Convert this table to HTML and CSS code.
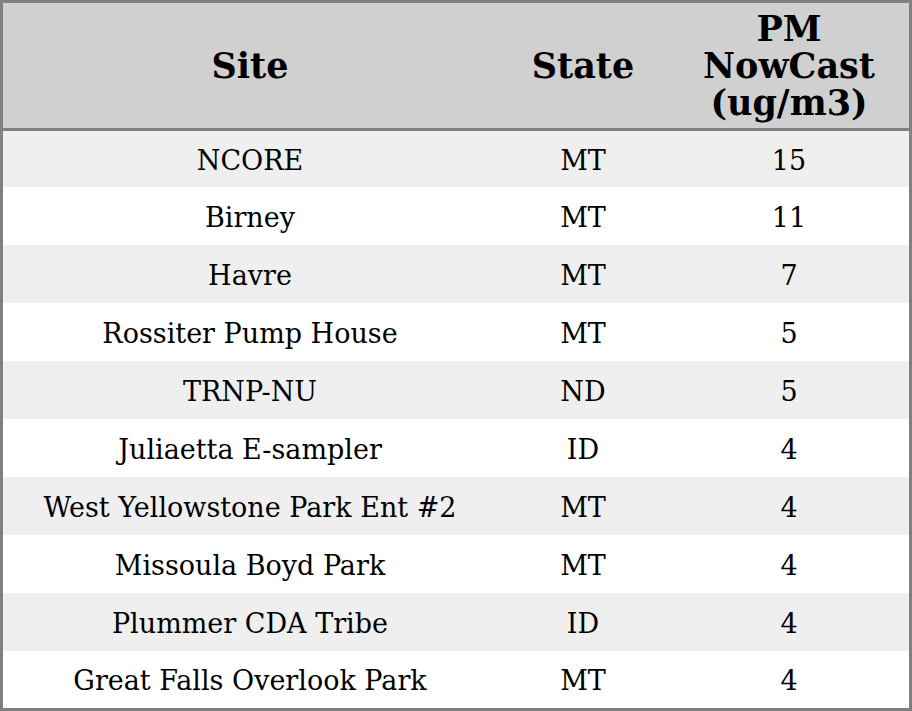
FILE: index.html
```html
<!DOCTYPE html>
<html>
<head>
<meta charset="utf-8">
<link rel="stylesheet" href="styles.css">
</head>
<body>
<table class="tbl">
  <thead>
    <tr class="head-row">
      <th class="c-site">Site</th>
      <th class="c-state">State</th>
      <th class="c-pm">PM<br>NowCast<br>(ug/m3)</th>
    </tr>
  </thead>
  <tbody>
    <tr class="r-first"><td>NCORE</td><td>MT</td><td>15</td></tr>
    <tr><td>Birney</td><td>MT</td><td>11</td></tr>
    <tr><td>Havre</td><td>MT</td><td>7</td></tr>
    <tr><td>Rossiter Pump House</td><td>MT</td><td>5</td></tr>
    <tr><td>TRNP-NU</td><td>ND</td><td>5</td></tr>
    <tr><td>Juliaetta E-sampler</td><td>ID</td><td>4</td></tr>
    <tr><td>West Yellowstone Park Ent #2</td><td>MT</td><td>4</td></tr>
    <tr><td>Missoula Boyd Park</td><td>MT</td><td>4</td></tr>
    <tr><td>Plummer CDA Tribe</td><td>ID</td><td>4</td></tr>
    <tr class="r-last"><td>Great Falls Overlook Park</td><td>MT</td><td>4</td></tr>
  </tbody>
</table>
</body>
</html>
```
FILE: styles.css
```css
html, body {
  margin: 0;
  padding: 0;
  background: #ffffff;
}
.tbl {
  width: 912px;
  border-collapse: separate;
  border-spacing: 0;
  border: 3px solid #808080;
  font-family: "DejaVu Serif", serif;
  color: #000;
  table-layout: fixed;
}
.tbl th {
  background: #d0d0d0;
  font-weight: bold;
  font-size: 35px;
  line-height: 37px;
  height: 125px;
  padding: 0;
  text-align: center;
  border-bottom: 3px solid #808080;
  box-sizing: content-box;
}
.c-site { width: 494px; }
.c-state { width: 172px; }
.c-pm { width: 240px; }
.tbl td {
  font-size: 27px;
  text-align: center;
  padding: 2px 0 0 0;
  height: 58px;
  box-sizing: border-box;
}
.tbl tbody .r-first td { height: 56px; padding-top: 3px; }
.tbl tbody .r-last td { height: 57px; }
.tbl tbody tr:nth-child(odd) td {
  background: #efefef;
}
.tbl tbody tr:nth-child(even) td {
  background: #ffffff;
}
```
